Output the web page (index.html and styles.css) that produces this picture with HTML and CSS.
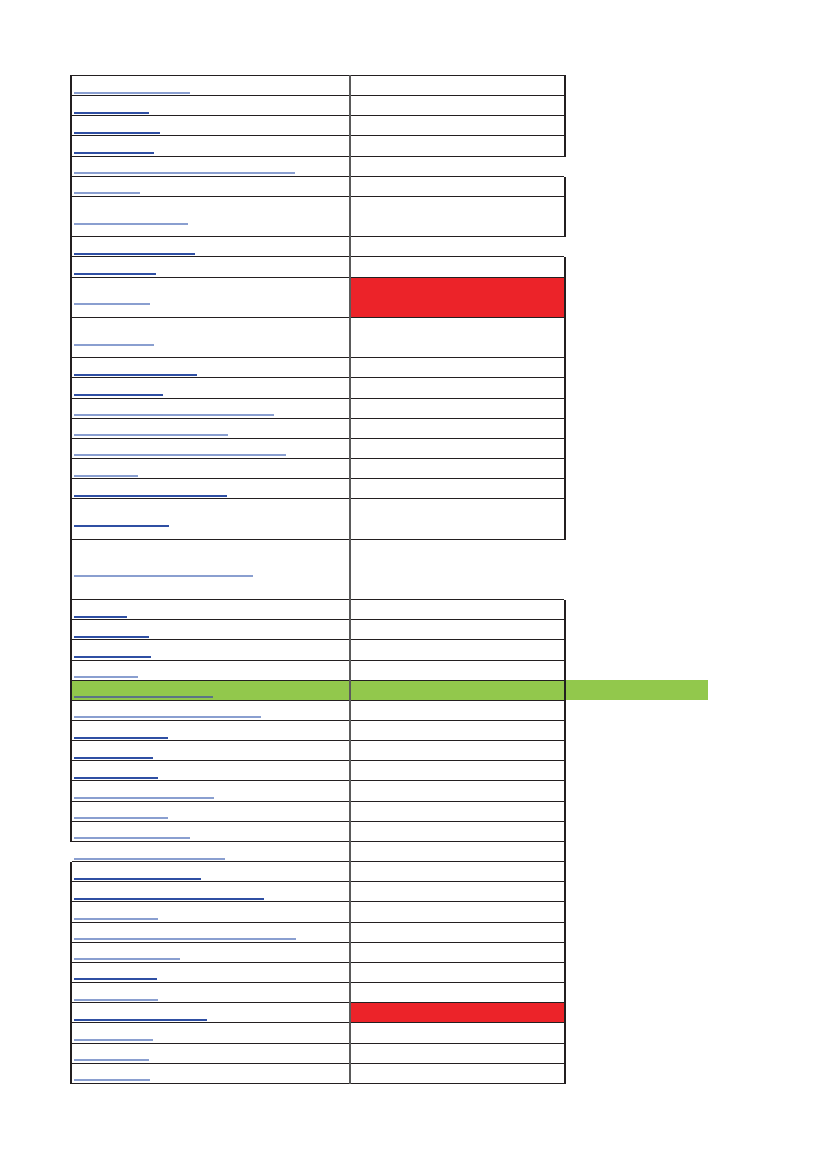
FILE: index.html
```html
<!DOCTYPE html>
<html>
<head>
<meta charset="utf-8">
<link rel="stylesheet" href="styles.css">
</head>
<body>
<table class="sheet">
<colgroup><col class="c-a"><col class="c-b"><col class="c-c"></colgroup>
<tbody>
<tr class="r1"><td class="ca"><a class="lk lt" style="width:116px"></a></td><td class="cb"></td><td class="cc"></td></tr>
<tr class="r1"><td class="ca"><a class="lk dk" style="width:75px"></a></td><td class="cb"></td><td class="cc"></td></tr>
<tr class="r1"><td class="ca"><a class="lk dk" style="width:86px"></a></td><td class="cb"></td><td class="cc"></td></tr>
<tr class="r1"><td class="ca"><a class="lk dk" style="width:80px"></a></td><td class="cb"></td><td class="cc"></td></tr>
<tr class="r1"><td class="ca"><a class="lk lt" style="width:221px"></a></td><td class="cb nr"></td><td class="cc"></td></tr>
<tr class="r1"><td class="ca"><a class="lk lt" style="width:66px"></a></td><td class="cb"></td><td class="cc"></td></tr>
<tr class="r2"><td class="ca"><a class="lk lt" style="width:114px"></a></td><td class="cb"></td><td class="cc"></td></tr>
<tr class="r1"><td class="ca"><a class="lk dk" style="width:121px"></a></td><td class="cb nr"></td><td class="cc"></td></tr>
<tr class="r1"><td class="ca"><a class="lk dk" style="width:82px"></a></td><td class="cb"></td><td class="cc"></td></tr>
<tr class="r2"><td class="ca"><a class="lk lt" style="width:76px"></a></td><td class="cb red"></td><td class="cc"></td></tr>
<tr class="r2"><td class="ca"><a class="lk lt" style="width:80px"></a></td><td class="cb"></td><td class="cc"></td></tr>
<tr class="r1"><td class="ca"><a class="lk dk" style="width:123px"></a></td><td class="cb"></td><td class="cc"></td></tr>
<tr class="r1"><td class="ca"><a class="lk dk" style="width:89px"></a></td><td class="cb"></td><td class="cc"></td></tr>
<tr class="r1"><td class="ca"><a class="lk lt" style="width:200px"></a></td><td class="cb"></td><td class="cc"></td></tr>
<tr class="r1"><td class="ca"><a class="lk lt" style="width:154px"></a></td><td class="cb"></td><td class="cc"></td></tr>
<tr class="r1"><td class="ca"><a class="lk lt" style="width:212px"></a></td><td class="cb"></td><td class="cc"></td></tr>
<tr class="r1"><td class="ca"><a class="lk lt" style="width:64px"></a></td><td class="cb"></td><td class="cc"></td></tr>
<tr class="r1"><td class="ca"><a class="lk dk" style="width:153px"></a></td><td class="cb"></td><td class="cc"></td></tr>
<tr class="r2"><td class="ca"><a class="lk dk" style="width:95px"></a></td><td class="cb"></td><td class="cc"></td></tr>
<tr class="r3"><td class="ca"><a class="lk lt" style="width:179px"></a></td><td class="cb nr"></td><td class="cc"></td></tr>
<tr class="r1"><td class="ca"><a class="lk dk" style="width:53px"></a></td><td class="cb"></td><td class="cc"></td></tr>
<tr class="r1"><td class="ca"><a class="lk dk" style="width:75px"></a></td><td class="cb"></td><td class="cc"></td></tr>
<tr class="r1"><td class="ca"><a class="lk dk" style="width:77px"></a></td><td class="cb"></td><td class="cc"></td></tr>
<tr class="r1"><td class="ca"><a class="lk lt" style="width:64px"></a></td><td class="cb"></td><td class="cc"></td></tr>
<tr class="r1 green"><td class="ca"><a class="lk gr" style="width:139px"></a></td><td class="cb"></td><td class="cc"></td></tr>
<tr class="r1"><td class="ca"><a class="lk lt" style="width:187px"></a></td><td class="cb"></td><td class="cc"></td></tr>
<tr class="r1"><td class="ca"><a class="lk dk" style="width:94px"></a></td><td class="cb"></td><td class="cc"></td></tr>
<tr class="r1"><td class="ca"><a class="lk dk" style="width:79px"></a></td><td class="cb"></td><td class="cc"></td></tr>
<tr class="r1"><td class="ca"><a class="lk dk" style="width:84px"></a></td><td class="cb"></td><td class="cc"></td></tr>
<tr class="r1"><td class="ca"><a class="lk lt" style="width:140px"></a></td><td class="cb"></td><td class="cc"></td></tr>
<tr class="r1"><td class="ca"><a class="lk lt" style="width:94px"></a></td><td class="cb"></td><td class="cc"></td></tr>
<tr class="r1"><td class="ca"><a class="lk lt" style="width:116px"></a></td><td class="cb"></td><td class="cc"></td></tr>
<tr class="r1"><td class="ca nl"><a class="lk lt" style="width:151px"></a></td><td class="cb"></td><td class="cc"></td></tr>
<tr class="r1"><td class="ca"><a class="lk dk" style="width:127px"></a></td><td class="cb"></td><td class="cc"></td></tr>
<tr class="r1"><td class="ca"><a class="lk dk" style="width:190px"></a></td><td class="cb"></td><td class="cc"></td></tr>
<tr class="r1"><td class="ca"><a class="lk lt" style="width:84px"></a></td><td class="cb"></td><td class="cc"></td></tr>
<tr class="r1"><td class="ca"><a class="lk lt" style="width:222px"></a></td><td class="cb"></td><td class="cc"></td></tr>
<tr class="r1"><td class="ca"><a class="lk lt" style="width:106px"></a></td><td class="cb"></td><td class="cc"></td></tr>
<tr class="r1"><td class="ca"><a class="lk dk" style="width:83px"></a></td><td class="cb"></td><td class="cc"></td></tr>
<tr class="r1"><td class="ca"><a class="lk lt" style="width:84px"></a></td><td class="cb"></td><td class="cc"></td></tr>
<tr class="r1"><td class="ca"><a class="lk dk" style="width:133px"></a></td><td class="cb red"></td><td class="cc"></td></tr>
<tr class="r1"><td class="ca"><a class="lk lt" style="width:79px"></a></td><td class="cb"></td><td class="cc"></td></tr>
<tr class="r1"><td class="ca"><a class="lk lt" style="width:75px"></a></td><td class="cb"></td><td class="cc"></td></tr>
<tr class="r1"><td class="ca"><a class="lk lt" style="width:76px"></a></td><td class="cb"></td><td class="cc"></td></tr>
</tbody>
</table>
</body>
</html>
```
FILE: styles.css
```css
html, body {
  margin: 0;
  padding: 0;
  background: #ffffff;
  font-family: "Liberation Sans", Arial, sans-serif;
}
body {
  padding: 75px 0 0 70px;
}
.sheet {
  border-collapse: collapse;
  table-layout: fixed;
  width: 637px;
}
.c-a { width: 279px; }
.c-b { width: 215px; }
.c-c { width: 143px; }
.r1 { height: 20.16px; }
.r2 { height: 40.32px; }
.r3 { height: 60.48px; }
.sheet td {
  padding: 0 0 0 2px;
  vertical-align: middle;
  font-size: 0;
  line-height: 0;
}
.ca {
  border-top: 1px solid #231f20;
  border-bottom: 1px solid #231f20;
  border-left: 2px solid #231f20;
  border-right: 2px solid #5a5a5a;
}
.cb {
  border-top: 1px solid #231f20;
  border-bottom: 1px solid #231f20;
  border-right: 2px solid #231f20;
}
.cc {
  border: none;
}
.ca.nl { border-left-color: transparent; }
.cb.nr { border-right-color: transparent; }
.red { background: #ec2329; }
.green td { background: #92c84c; }
.lk {
  display: block;
  height: 2px;
  margin-top: 14px;
}
.dk { background: #2f4fa3; }
.lt { background: #8a9fd0; }
.gr { background: #5b7486; }
```
